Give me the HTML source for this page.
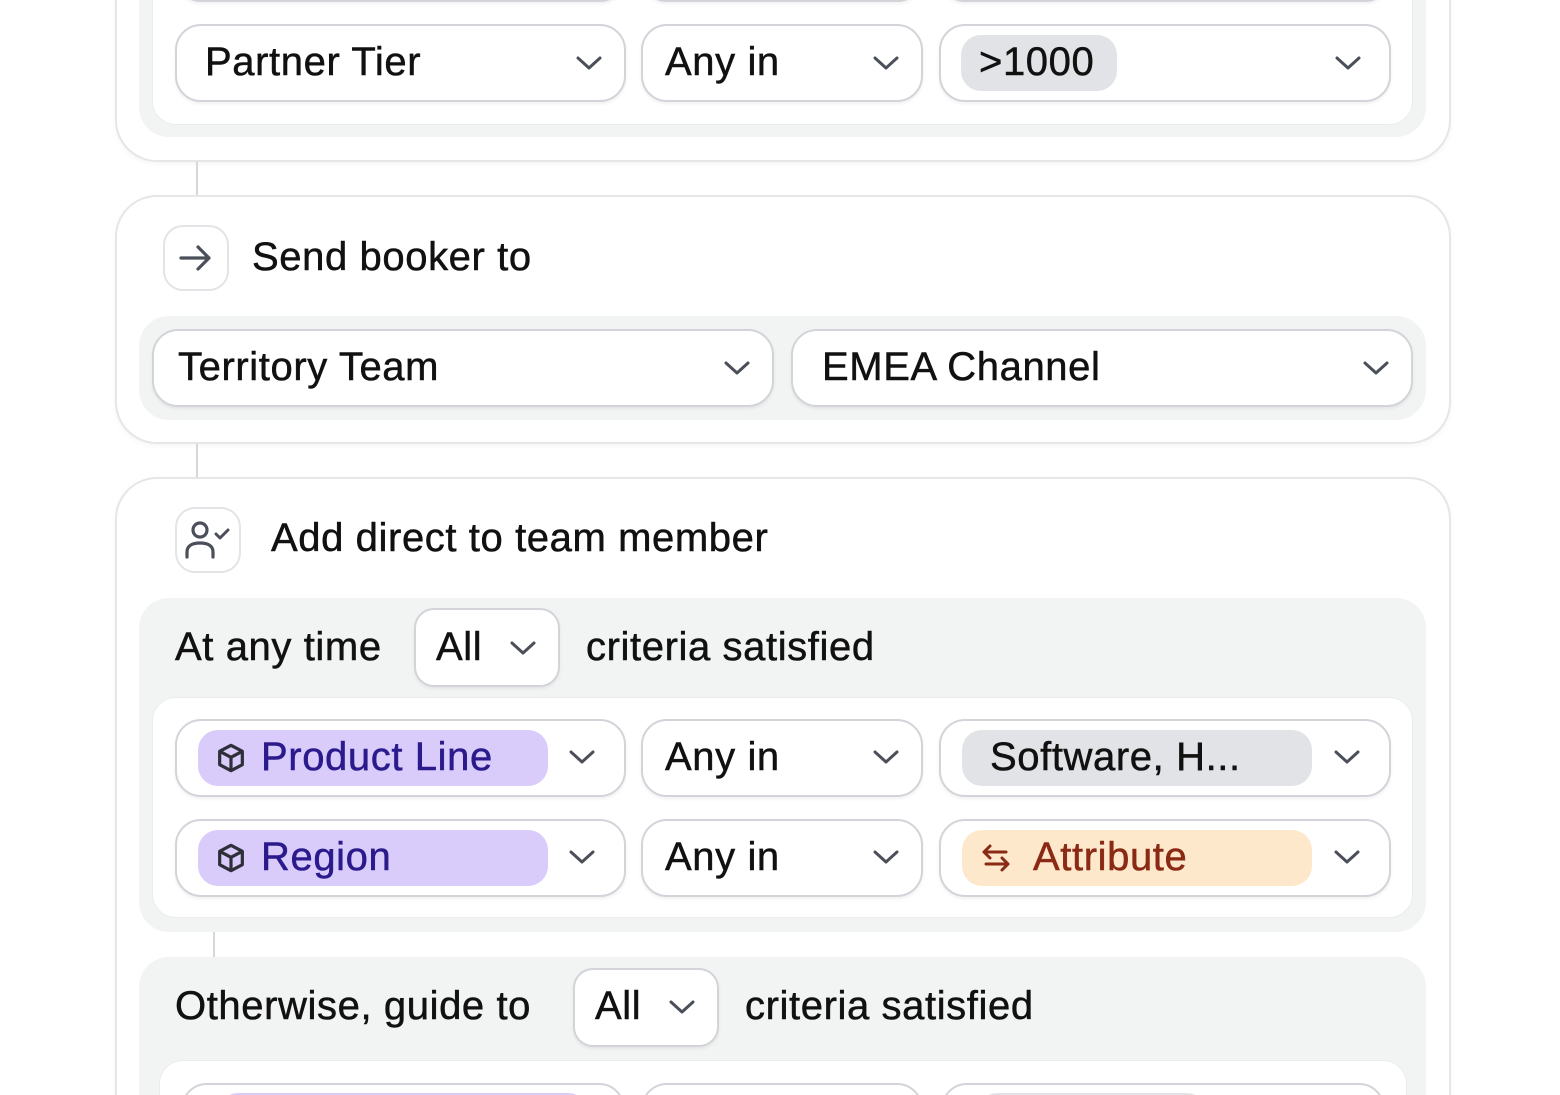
<!DOCTYPE html>
<html><head><style>
*{margin:0;padding:0;box-sizing:border-box}
html,body{width:1560px;height:1095px;overflow:hidden}
body{background:#fff;font-family:"Liberation Sans",sans-serif;color:#111}
#w{position:relative;width:1560px;height:1095px;overflow:hidden}
.a{position:absolute}
.card{position:absolute;left:115px;width:1336px;border:2px solid #e5e6e8;border-radius:42px;background:#fff;box-shadow:0 2px 6px rgba(0,0,0,.04)}
.grey{position:absolute;background:#f2f3f3;border-radius:30px}
.wbox{position:absolute;background:#fff;border-radius:24px;border:1px solid #ebecee}
.f{position:absolute;height:78px;border:2px solid #d2d4da;border-radius:26px;background:#fff;box-shadow:0 2px 3px rgba(0,0,0,.06)}
.t{position:absolute;font-size:40px;line-height:40px;white-space:nowrap;letter-spacing:0.6px;-webkit-text-stroke:0.5px currentColor}
.chev{position:absolute;width:28px;height:16px}
.chip{position:absolute;height:56px;border-radius:20px}
.line{position:absolute;width:2px;background:#d6d7db}
.ib{position:absolute;width:66px;height:66px;border:2px solid #e3e4e7;border-radius:20px;background:#fff}
</style></head><body><div id="w">
<svg width="0" height="0" style="position:absolute"><defs><symbol id="cv" viewBox="0 0 28 16"><path d="M3 3 L14 13 L25 3" fill="none" stroke="#4b4f5a" stroke-width="3" stroke-linecap="round" stroke-linejoin="round"/></symbol>
<symbol id="cube" viewBox="0 0 24 24"><path d="M12 2.5 L20.5 7 V17 L12 21.5 L3.5 17 V7 Z M3.5 7 L12 11.5 L20.5 7 M12 11.5 V21.5" fill="none" stroke="#2f2f3a" stroke-width="2.4" stroke-linejoin="round"/></symbol></defs></svg>

<div class="card" style="top:-60px;height:222px"></div>
<div class="grey" style="left:139px;top:-40px;width:1287px;height:177px"></div>
<div class="wbox" style="left:152px;top:-30px;width:1261px;height:155px"></div>
<div class="f" style="left:175px;top:-76px;width:451px"></div>
<div class="f" style="left:641px;top:-76px;width:282px"></div>
<div class="f" style="left:939px;top:-76px;width:452px"></div>
<div class="f" style="left:175px;top:24px;width:451px"></div>
<div class="t" style="left:205px;top:42px">Partner Tier</div>
<svg class="chev" style="left:575px;top:55px"><use href="#cv"/></svg>
<div class="f" style="left:641px;top:24px;width:282px"></div>
<div class="t" style="left:665px;top:42px">Any in</div>
<svg class="chev" style="left:872px;top:55px"><use href="#cv"/></svg>
<div class="f" style="left:939px;top:24px;width:452px"></div>
<div class="chip" style="left:961px;top:35px;width:156px;background:#e2e3e6"></div>
<div class="t" style="left:979px;top:42px">&gt;1000</div>
<svg class="chev" style="left:1334px;top:55px"><use href="#cv"/></svg>

<div class="line" style="left:196px;top:162px;height:33px"></div>

<div class="card" style="top:195px;height:249px"></div>
<div class="ib" style="left:163px;top:225px"></div>
<svg class="a" style="left:178px;top:242px" width="36" height="32" viewBox="0 0 36 32"><path d="M3 16 H31 M20 5 L31 16 L20 27" fill="none" stroke="#4b4f5a" stroke-width="3.2" stroke-linecap="round" stroke-linejoin="round"/></svg>
<div class="t" style="left:252px;top:237px">Send booker to</div>
<div class="grey" style="left:139px;top:316px;width:1287px;height:104px"></div>
<div class="f" style="left:152px;top:329px;width:622px"></div>
<div class="t" style="left:178px;top:347px">Territory Team</div>
<svg class="chev" style="left:723px;top:360px"><use href="#cv"/></svg>
<div class="f" style="left:791px;top:329px;width:622px"></div>
<div class="t" style="left:822px;top:347px">EMEA Channel</div>
<svg class="chev" style="left:1362px;top:360px"><use href="#cv"/></svg>

<div class="line" style="left:196px;top:444px;height:33px"></div>

<div class="card" style="top:477px;height:680px"></div>
<div class="ib" style="left:175px;top:507px"></div>
<svg class="a" style="left:184px;top:518px" width="50" height="46" viewBox="0 0 50 46"><circle cx="16" cy="12" r="7" fill="none" stroke="#4b4f5a" stroke-width="3.2"/><path d="M3 39 V34 C3 28 8 25 16 25 C24 25 29 28 29 34 V39" fill="none" stroke="#4b4f5a" stroke-width="3.2" stroke-linecap="round"/><path d="M32 16 L36 20 L44 12" fill="none" stroke="#4b4f5a" stroke-width="3" stroke-linecap="round" stroke-linejoin="round"/></svg>
<div class="t" style="left:271px;top:518px">Add direct to team member</div>

<div class="grey" style="left:139px;top:598px;width:1287px;height:334px"></div>
<div class="t" style="left:175px;top:627px">At any time</div>
<div class="f" style="left:414px;top:608px;width:146px;height:79px;border-radius:20px"></div>
<div class="t" style="left:436px;top:627px">All</div>
<svg class="chev" style="left:509px;top:640px"><use href="#cv"/></svg>
<div class="t" style="left:586px;top:627px">criteria satisfied</div>
<div class="wbox" style="left:152px;top:697px;width:1261px;height:221px"></div>

<div class="f" style="left:175px;top:719px;width:451px"></div>
<div class="chip" style="left:198px;top:730px;width:350px;background:#d9ccfb"></div>
<svg class="a" style="left:215px;top:742px" width="32" height="32"><use href="#cube"/></svg>
<div class="t" style="left:261px;top:737px;color:#2b1a8c">Product Line</div>
<svg class="chev" style="left:568px;top:749px"><use href="#cv"/></svg>
<div class="f" style="left:641px;top:719px;width:282px"></div>
<div class="t" style="left:665px;top:737px">Any in</div>
<svg class="chev" style="left:872px;top:749px"><use href="#cv"/></svg>
<div class="f" style="left:939px;top:719px;width:452px"></div>
<div class="chip" style="left:962px;top:730px;width:350px;background:#e2e3e6"></div>
<div class="t" style="left:990px;top:737px">Software, H...</div>
<svg class="chev" style="left:1333px;top:749px"><use href="#cv"/></svg>

<div class="f" style="left:175px;top:819px;width:451px"></div>
<div class="chip" style="left:198px;top:830px;width:350px;background:#d9ccfb"></div>
<svg class="a" style="left:215px;top:842px" width="32" height="32"><use href="#cube"/></svg>
<div class="t" style="left:261px;top:837px;color:#2b1a8c">Region</div>
<svg class="chev" style="left:568px;top:849px"><use href="#cv"/></svg>
<div class="f" style="left:641px;top:819px;width:282px"></div>
<div class="t" style="left:665px;top:837px">Any in</div>
<svg class="chev" style="left:872px;top:849px"><use href="#cv"/></svg>
<div class="f" style="left:939px;top:819px;width:452px"></div>
<div class="chip" style="left:962px;top:830px;width:350px;background:#fde8cc"></div>
<svg class="a" style="left:980px;top:842px" width="32" height="32" viewBox="0 0 32 32"><path d="M4 10 H26 M10 4 L4 10 L10 16 M28 22 H6 M22 16 L28 22 L22 28" fill="none" stroke="#8a2a14" stroke-width="3" stroke-linecap="round" stroke-linejoin="round"/></svg>
<div class="t" style="left:1033px;top:837px;color:#8a2a14">Attribute</div>
<svg class="chev" style="left:1333px;top:849px"><use href="#cv"/></svg>

<div class="line" style="left:213px;top:932px;height:25px"></div>

<div class="grey" style="left:139px;top:957px;width:1287px;height:200px"></div>
<div class="t" style="left:175px;top:986px">Otherwise, guide to</div>
<div class="f" style="left:573px;top:968px;width:146px;height:79px;border-radius:20px"></div>
<div class="t" style="left:595px;top:986px">All</div>
<svg class="chev" style="left:668px;top:999px"><use href="#cv"/></svg>
<div class="t" style="left:745px;top:986px">criteria satisfied</div>
<div class="wbox" style="left:159px;top:1060px;width:1248px;height:100px"></div>
<div class="f" style="left:181px;top:1083px;width:444px"></div>
<div class="chip" style="left:218px;top:1093px;width:370px;background:#d9ccfb"></div>
<div class="f" style="left:641px;top:1083px;width:282px"></div>
<div class="f" style="left:941px;top:1083px;width:444px"></div>
<div class="chip" style="left:977px;top:1093px;width:230px;background:#e2e3e6"></div>
</div></body></html>
